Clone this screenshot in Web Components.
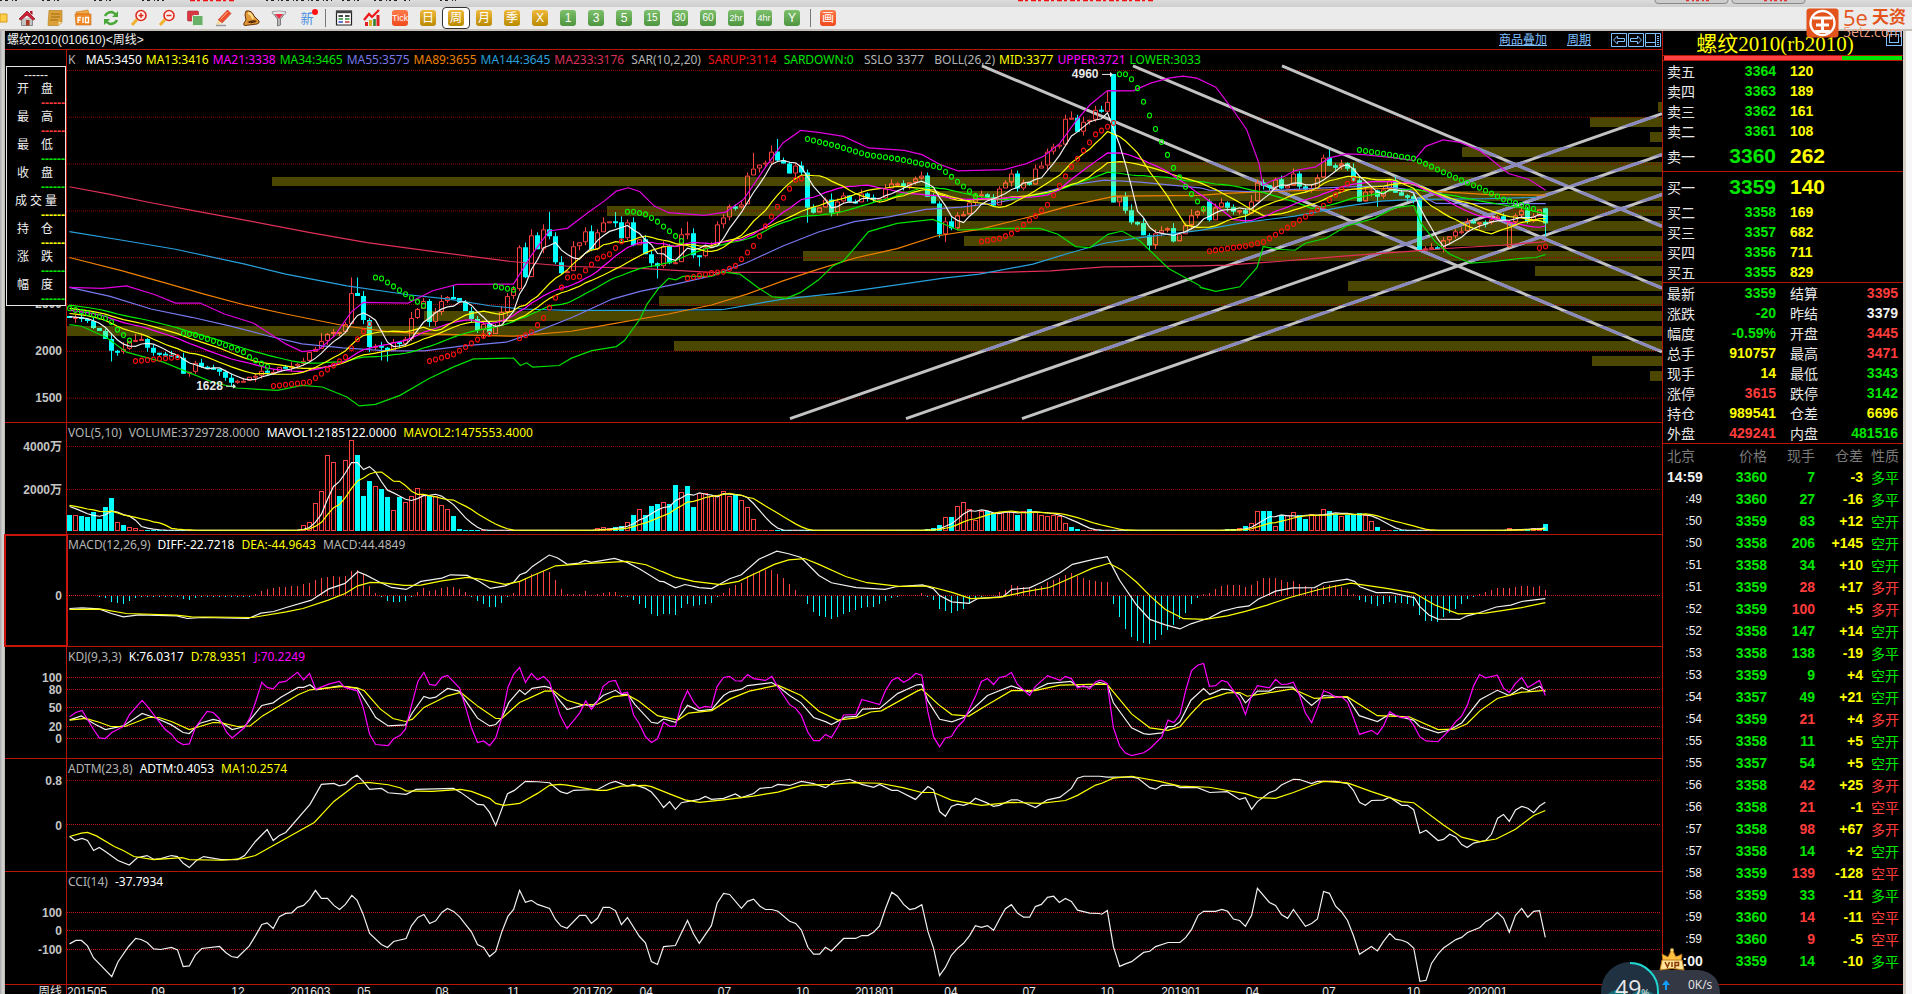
<!DOCTYPE html>
<html lang="zh-CN">
<head>
<meta charset="utf-8">
<title>螺纹2010 周线</title>
<style>
html,body{margin:0;height:100%;background:#000;overflow:hidden}
body{font:12px/20px "Liberation Sans","Noto Sans CJK SC",sans-serif}
</style>
</head>
<body>
<trade-app></trade-app>
<script>
/* ---------- data ---------- */
// Digitised curve tiles: [x scale, x origin, y scale, y origin]
const TILES={A:[2.45,0,3,30],B:[2.8,640,3,30],C:[2.904,1140,3,30],E:[2.376,0,3,420],F:[2.8,0,3,640],G:[2.8,560,2.732,420],H:[2.751,1100,2.732,420]};
const curve=s=>{let t;const out=[];for(const w of s.trim().split(/\s+/)){if(TILES[w]){t=TILES[w];continue}const[a,b]=w.split(',').map(Number);out.push((a/t[0]+t[1]).toFixed(1)+','+(b/t[2]+t[3]).toFixed(1))}return out.join(' ')};
const line=(pts,c,w=1.2)=>`<polyline points="${pts}" fill="none" stroke="${c}" stroke-width="${w}" vector-effect="non-scaling-stroke"/>`;
const X=i=>69.5+6*i;
// Sparse "index:value" list, linear between the knots
const knots=s=>{const k=s.trim().split(/\s+/).map(p=>p.split(':').map(Number)),o={};for(let n=0;n<k.length-1;n++){const[a,u]=k[n],[b,v]=k[n+1];for(let i=a;i<=b;i++)o[i]=u+(v-u)*(i-a)/(b-a)}return o};

const CLOSE=`868 865 870 876 898 905 930 965 968 960 935 933 930 958 972 975 978 982 988 1035 1030 1003 1015 1018 1020 1030 1048 1062 1056 1055 1045 1042 1025 1032 1028 1015 1018 1010 1005 995 970 960 935 915 910 908 885 793 800 872 955 950 958 965 938 945 930 868 840 817 880 850 815 805 806 820 845 870 903 885 915 890 850 802 780 655 745 618 660 600 620 700 733 725 652 640 605 660 610 580 577 578 628 580 647 630 675 702 710 652 703 700 615 613 677 680 655 650 585 565 530 535 525 437 418 405 398 365 392 402 433 408 430 535 548 535 510 550 515 497 515 520 492 505 510 508 478 463 462 470 460 447 437 500 521 615 575 597 557 555 518 498 494 505 527 478 458 432 477 458 465 417 407 367 350 345 268 265 305 275 270 240 245 217 518 502 542 580 583 617 648 612 602 596 635 615 587 557 547 540 573 535 520 533 546 542 553 517 458 468 475 450 478 468 433 472 480 478 443 385 408 412 403 418 452 517 485 484 502 480 452 490 497 500 512 660 658 653 656 632 620 607 605 577 583 578 580 570 562 572 580 558 543 575 560 540 583`.split(' ').map(Number);
const OPEN={0:860,174:132,190:515,240:655,246:537};
const HIGH={9:940,11:915,47:745,48:745,64:770,76:640,80:547,91:548,103:577,114:370,118:328,167:245,173:182,174:132,209:375,210:360,246:535,42:913};
const LOW={7:998,19:1035,27:1072,50:970,52:995,53:998,60:893,69:928,98:748,105:712,123:580,145:625,146:638,180:665,196:578,218:532,246:620,240:656};
const Y=v=>v/3+30;
const HIST=Array.from({length:40},(_,k)=>868-2.4*(40-k));
const ma=(arr,pre,n,f)=>{const a=pre.concat(arr),p=pre.length;return arr.map((_,i)=>{let s=0;for(let j=0;j<n;j++)s+=a[p+i-j];return X(i)+','+f(s/n).toFixed(1)}).join(' ')};

const BANDS=[1658,1590,1650,1462,1050,272,896,607,957,964,803,1535,1348,659,424,67,674,1592,1650];
const TREND='M982 66L1662 353M1133 66L1662 289M1282 66L1662 227M790 420L1662 114M906 420L1662 155M1022 420L1662 195';
const SAR_G=['0:838 6:868 7:880 8:902 10:935','19:913 21:918 25:942 29:970 30:985 33:1014','51:745 52:748 54:772 59:830','71:772 74:782','93:547 94:547 96:555 98:577 102:635','123:328 128:350 133:376 138:388 145:413 151:500','175:133 176:133 177:148 178:175 181:298 184:415 186:472 189:538','215:361 224:387 226:403 231:445 235:475 239:510 244:538'];
const SAR_R=['11:997 18:985','34:1072 40:1060 46:985 48:931 50:885','60:997 64:977 69:921 70:915','75:928 77:910 79:867 83:745 85:742 88:688 90:675 92:637','103:747 107:732 109:728 111:710 114:650 118:532 121:451 122:447','152:637 155:628 157:613 161:560 163:526 167:412 171:314 174:280','190:666 196:650 199:638 203:595 209:529 213:463 214:450','245:656 246:652'];

// Candles: an outline for rising weeks, a solid block for falling ones
function candles(){let up='',dn='',wu='',wd='';
  CLOSE.forEach((c,i)=>{const o=OPEN[i]??CLOSE[i-1],rise=c<=o,x=67+6*i;
    let a=Math.round(Y(Math.min(c,o))),b=Math.round(Y(Math.max(c,o)));if(b-a<2)b=a+2;
    const hi=HIGH[i]?Y(HIGH[i]):a-(i*7%5)-(b-a>9?2:0),lo=LOW[i]?Y(LOW[i]):b+(i*11%6)-1;
    if(rise){up+=`M${x+.5} ${a+.5}h4v${b-a-1}h-4z`;wu+=`M${x+2.5} ${hi}V${a}M${x+2.5} ${b}V${Math.max(lo,b)}`}
    else{dn+=`M${x} ${a}h5v${b-a}h-5z`;wd+=`M${x+2.5} ${hi}V${Math.max(lo,b)}`}});
  return(r,c)=>`<path d="${up}${wu}" fill="none" stroke="${r}"/><path d="${dn}" fill="${c}"/><path d="${wd}" stroke="${c}"/>`}

function mainPlot(){
  const bands=BANDS.map((x,k)=>`<rect x="${x}" y="${102+15*k}" width="${1662-x}" height="10"/>`).join('');
  const cs=candles();
  const dots=(l,c)=>l.map(s=>Object.entries(knots(s)).map(([i,v])=>`<ellipse cx="${X(+i)}" cy="${Y(v).toFixed(1)}" rx="2" ry="2.5"/>`).join('')).map(g=>`<g fill="none" stroke="${c}" stroke-width="1.1">${g}</g>`).join('');
  return `<defs><clipPath id="b">${bands}</clipPath></defs><g fill="#4b4600" shape-rendering="crispEdges">${bands}</g>`
  +grid([70,117,164,211,258,305,352,399],'#900000')
  +`<path d="${TREND}" stroke="#c3c3c3" stroke-width="3"/><path d="${TREND}" stroke="#8a8abf" stroke-width="3.2" clip-path="url(#b)"/>`
  +`<g>${cs('#ff4040','#00ffff')}</g><g clip-path="url(#b)">${cs('#ff6a38','#46ffb9')}</g>`
  +line(curve('A 170,472 270,495 370,520 500,550 620,577 760,610 900,640 1050,665 1250,697 1400,712 1568,718 B 200,730 700,730 1000,730 1150,725 1300,713 1568,710 C 250,708 400,697 600,680 800,665 900,657 1050,648 1178,637'),'#e03058')
  +line(curve('A 170,607 300,633 430,660 600,705 700,735 850,770 1000,797 1100,810 1200,830 1280,840 1390,844 1568,844 B 230,842 400,810 550,793 700,770 850,747 950,735 1100,705 1200,672 1300,642 1400,625 1568,603 C 300,580 450,560 600,530 700,515 800,510 1000,508 1150,504'),'#28a0dc')
  +line(curve('A 170,685 300,725 400,760 500,795 600,828 700,855 850,892 950,908 1050,915 1200,920 1260,922 1400,907 1500,885 1568,870 B 80,855 200,828 300,795 400,755 500,720 600,687 720,658 830,620 950,600 1100,560 1200,530 1330,500 1568,498 C 250,492 400,485 600,480 720,477 850,485 1000,495 1178,497'),'#f08000')
  +line(curve('A 170,775 270,802 370,840 470,865 570,893 660,922 740,945 840,957 950,966 1040,966 1130,952 1240,940 1300,915 1400,866 1500,810 1568,787 B 100,765 200,740 300,700 400,650 500,608 600,577 700,562 800,540 900,533 1000,520 1100,498 1200,468 1300,452 1400,458 1568,475 C 200,482 330,487 450,480 600,472 700,470 780,480 860,522 950,523 1080,523 1178,523'),'#7878f0')
  +line(ma(CLOSE,HIST,34,Y),'#00f000')+line(ma(CLOSE,HIST,26,Y),'#ffff00')+line(ma(CLOSE,HIST,21,Y),'#ff00ff')+line(ma(CLOSE,HIST,13,Y),'#ffff00')+line(ma(CLOSE,HIST,5,Y),'#f0f0f0')
  +line(curve('A 170,775 250,778 310,770 380,797 430,822 490,822 550,855 620,882 700,945 740,968 780,963 820,920 860,850 890,820 1000,822 1060,785 1120,766 1258,765 1300,682 1345,605 1390,597 1440,550 1480,515 1510,485 1540,475 1568,487 B 40,530 80,550 180,558 240,548 290,510 350,415 400,340 450,302 500,308 570,320 640,355 740,362 790,375 840,405 890,424 1020,420 1080,403 1130,380 1175,342 1220,275 1260,225 1309,182 1380,183 1430,160 1480,145 1520,139 C 165,145 220,172 270,240 310,300 345,400 357,467 380,455 420,440 450,423 510,412 550,385 600,373 650,375 740,385 795,393 830,350 880,331 930,338 985,362 1020,390 1070,432 1130,450 1178,482'),'#e000e0')
  +line(curve('A 170,887 200,892 260,925 310,970 400,1000 460,1030 520,1060 580,1078 680,1085 740,1070 790,1075 850,1105 880,1132 920,1127 980,1100 1050,1050 1110,1015 1160,990 1258,988 1275,1010 1290,1002 1305,1015 1370,1010 1400,988 1450,965 1510,953 1530,935 1568,870 B 20,825 50,780 80,748 100,752 120,742 200,742 230,728 280,735 330,775 370,803 410,808 450,790 500,752 540,710 570,695 640,607 720,582 820,570 890,602 1000,597 1120,597 1170,615 1220,652 1260,655 1310,615 1350,605 1400,635 1480,718 1568,770 C 175,775 220,787 290,773 340,715 358,652 400,660 450,663 480,642 540,627 600,590 680,567 740,535 795,528 815,580 860,640 900,675 960,702 1030,697 1100,688 1150,685 1178,676'),'#00e000')
  +dots(SAR_G,'#00ff00')+dots(SAR_R,'#ff1010')
  +`<g stroke="#e8e8e8" fill="#e8e8e8"><path d="M1102 74.500h9M226 387.500h9"/><path stroke="none" d="M1110 72l3 2.500-3 2.500zM233 385l3 2.500-3 2.500z"/></g>`;
}
const grid=(ys,c)=>`<path d="${ys.map(y=>`M67 ${y+.5}H1661`).join('')}" stroke="${c}" stroke-dasharray="1 1" shape-rendering="crispEdges"/>`;

// Weekly volume bars, r rising / c falling
function volumes(){
  const v={},put=(i,s,base,k)=>s.split(' ').forEach((w,j)=>v[i+j]=[(base-parseInt(w))/k,w.slice(-1)]);
  for(let i=0;i<247;i++)v[i]=[1,CLOSE[i]<=(CLOSE[i-1]??0)?'r':'c'];
  put(0,'288c 286r 291c 294c 279c 300c 264c 237c 307r 318c 322r 325r 331r',335,3);
  put(38,'331r 318r 307r 250r 214r 106r 127r 231c 121r 61r 108c 231c 186c 199r 210c 234c 271r 234c 247r 229r 205r 227r 230c 231r 256r 268r 291c 328c',335,3);
  put(88,'298r 295r 298r 293c 291c 280r 261c 244r 262c 238c 230c 227r 232c 180c 198r 183c 240c 200r 200r 210r 206r 195r 209r 205c 220r 240r 273r 301r',305,2.732);
  put(143,'300c 298c 288c 268r 268c 238r 227r 244r 275r 250r 250c 255c 253r 253r 253r 260c 250r 246c 253r 260r 265r 262r 265r 282r 295c 300c',305,2.732);
  put(193,'300c 299c 298r 292c 282r 251r 251c 251c 290r 260c 262r 252r 260c 272c 258r 262r 246r 251c 258c 265r 260c 260c 257c 260r 277r 295c',305,2.732);
  put(240,'298r 300r 299r 299c 298r 296r 287c',305,2.732);
  return Array.from({length:247},(_,i)=>v[i])}
function volPlot(){
  const v=volumes();let r='',c='';
  v.forEach(([h,k],i)=>{h=Math.max(1,Math.round(h));const x=67+6*i;if(k==='r')r+=h<3?`M${x} 531.500h5`:`M${x+.5} ${532.5-h}h4v${h-1}h-4z`;else c+=`M${x} ${532-h}h5v${h}h-5z`});
  const h=v.map(a=>a[0]),pre=Array(10).fill(27),f=y=>532-y;
  return grid([447,490],'#900000')+`<g shape-rendering="crispEdges"><path d="${r}" fill="none" stroke="#ff4040"/><path d="${c}" fill="#0ff"/></g>`+line(ma(h,pre,5,f),'#f0f0f0')+line(ma(h,pre,10,f),'#ffff00')}

const MACD_H=knots('0:1 3:1 5:-1 6:-2 7:-6 8:-7 9:-8 10:-5 11:-2 12:-1 18:-1 19:-3 20:-4 21:-2 22:-1 30:-1 31:2 32:5 34:8 36:9 38:10 40:13 42:18 44:20 45:19 46:20 47:25 48:26 49:22 50:10 51:3 52:-1 53:-5 54:-6 55:-6 56:-5 57:-1 58:4 59:8 60:5 61:6 62:8 63:9 64:9 65:7 66:4 67:-1 68:-5 69:-8 70:-11 71:-11 72:-7 73:-1 74:3 75:14 77:22 78:23 79:25 80:24 81:16 82:7 83:2 85:2 86:5 87:1 88:2 90:4 91:4 92:-1 93:-1 94:-4 95:-8 96:-12 97:-18 98:-20 99:-18 101:-19 102:-12 103:-8 104:-10 106:-8 107:-7 108:-1 109:3 110:8 112:13 113:20 115:25 117:26 118:22 119:18 121:6 122:1 123:-8 124:-16 125:-20 127:-23 128:-21 130:-16 132:-12 134:-11 136:-5 137:-2 138:-1 141:1 142:3 143:-1 144:-4 145:-13 147:-17 149:-13 150:-8 151:-3 152:-1 154:1 156:6 157:11 159:9 161:8 162:10 163:14 165:18 167:23 168:20 170:16 172:14 173:14 174:-8 175:-21 176:-33 177:-41 178:-45 179:-47 180:-48 181:-44 182:-39 184:-29 186:-17 187:-8 188:-2 189:2 190:3 192:10 193:11 195:11 196:9 197:11 198:15 199:18 201:18 203:14 204:15 205:12 207:8 208:8 209:10 211:11 213:7 214:2 215:-4 217:-8 218:-10 220:-6 223:-8 224:-10 225:-19 226:-25 228:-26 230:-17 231:-13 233:-3 234:-1 235:2 237:6 238:8 240:8 242:10 244:9 245:10 246:6');
function macdPlot(){let r='',c='';for(const i in MACD_H){const h=MACD_H[i],s=`M${X(+i)} 597V${597-Math.round(h)}`;h>=0?r+=s:c+=s}
  return grid([596],'#d01818')+`<g shape-rendering="crispEdges"><path d="${r}" stroke="#ff4040"/><path d="${c}" stroke="#0ff"/></g>`
  +line(curve('E 165,568 195,566 235,569 265,583 293,593 330,587 420,590 445,598 480,595 590,598 620,582 650,577 680,565 740,543 780,510 820,493 850,458 870,468 900,488 930,505 965,511 1000,487 1050,477 1070,467 1110,469 1140,488 1165,508 1200,500 1220,490 1235,467 1250,460 1265,442 1305,408 1325,417 1348,436 1375,432 1390,424 1405,430 1460,418 1490,430 1520,450 1568,487 G 290,444 323,461 350,452 390,460 425,463 475,436 508,425 557,383 607,361 640,368 675,378 725,427 760,447 830,460 910,465 940,458 1015,453 1045,463 1063,482 1097,499 1145,503 1170,490 1240,485 1265,465 1315,461 1350,445 1400,420 1435,397 1500,382 H 20,376 37,408 54,440 100,507 137,547 180,562 220,573 250,559 300,543 335,525 380,514 410,510 435,492 483,470 530,461 590,460 615,447 680,437 700,443 715,458 760,474 800,474 865,488 880,512 905,535 930,546 990,547 1010,537 1040,530 1090,513 1130,508 1160,498 1225,490'),'#f0f0f0')
  +line(curve('E 165,571 240,570 300,583 420,588 455,593 600,595 680,578 720,568 780,543 820,523 850,500 880,490 910,491 960,499 1000,498 1050,485 1110,475 1140,480 1200,496 1235,487 1265,470 1320,440 1400,433 1490,427 1535,437 1568,455 G 290,418 323,432 375,443 450,452 500,443 557,417 600,397 640,385 685,381 725,397 800,430 860,447 950,457 1030,456 1100,474 1150,490 1230,487 1300,472 1370,460 1450,425 1490,408 H 25,394 60,412 100,445 140,485 180,520 230,545 290,547 350,537 400,525 460,508 520,488 600,466 690,448 780,461 865,475 920,507 985,532 1060,530 1160,515 1225,501'),'#ffff00')}
const kdjPlot=()=>grid([678,690,708,727,739],'#c01010')
  +line(curve('F 195,242 228,230 262,253 295,271 345,260 398,223 440,238 480,257 513,280 530,283 560,252 597,241 614,245 650,271 685,262 715,223 733,199 765,191 785,175 835,145 850,145 868,137 885,152 950,140 1000,148 1035,205 1052,235 1087,260 1135,257 1155,220 1187,172 1203,178 1220,174 1253,148 1285,156 1337,237 1371,260 1388,256 1405,236 1425,190 1455,153 1470,166 1490,148 1525,142 1540,146 1568,185 G 20,793 70,780 90,785 120,755 155,741 172,752 190,752 210,780 256,828 273,831 290,819 323,828 357,782 390,797 425,793 458,755 475,745 508,738 525,728 593,720 610,730 643,755 675,775 710,815 745,827 760,834 800,814 830,812 847,792 895,790 945,750 1000,726 1013,725 1030,770 1063,820 1097,827 1130,815 1197,755 1264,729 1315,746 1365,723 1430,717 1450,730 1483,732 1510,719 H 20,725 37,775 87,843 120,859 135,861 170,857 187,840 203,839 220,827 250,768 285,736 302,752 335,738 355,739 385,752 400,775 433,743 466,743 483,733 530,732 565,767 582,782 615,755 680,760 713,810 763,826 797,806 862,822 880,840 930,857 960,850 995,830 1045,767 1093,741 1126,755 1160,733 1180,742 1210,730 1225,745'),'#f0f0f0')
  +line(curve('F 195,243 240,238 280,250 310,262 350,262 415,235 445,235 480,247 530,271 597,250 620,251 665,262 700,260 735,230 835,167 868,152 960,142 1000,146 1020,155 1065,210 1100,238 1135,247 1155,240 1187,205 1253,170 1290,160 1340,203 1388,238 1405,238 1455,190 1525,156 1550,155 1568,170 G 20,768 60,780 105,779 150,758 190,754 220,770 273,810 330,822 360,803 425,796 475,765 530,743 610,727 675,755 725,798 778,822 830,816 870,800 900,797 1000,743 1013,738 1060,780 1097,807 1145,811 1197,780 1264,742 1330,742 1400,727 1510,724 H 20,725 87,805 137,843 187,850 220,840 250,805 285,769 350,748 385,747 405,757 450,750 530,737 590,763 680,758 763,810 850,813 930,848 975,847 1010,832 1045,797 1093,763 1160,746 1225,741'),'#ffff00')
  +line(curve('F 195,233 212,220 230,214 262,271 278,296 295,298 313,280 345,262 362,227 398,184 415,205 440,240 462,270 480,285 497,307 513,316 530,314 547,265 580,217 597,220 614,238 635,280 650,296 685,265 700,235 715,190 733,130 748,145 765,149 782,130 800,127 833,100 850,122 867,103 884,151 920,135 950,127 965,145 1000,155 1017,205 1035,285 1052,316 1087,319 1103,298 1120,289 1135,270 1152,200 1170,127 1187,100 1203,136 1220,139 1237,115 1253,109 1287,147 1304,205 1320,265 1337,310 1354,305 1371,319 1388,296 1405,236 1422,145 1438,106 1455,85 1471,130 1488,103 1505,122 1522,112 1539,130 1568,227 G 5,818 20,845 55,803 72,770 88,793 105,772 121,730 138,717 155,714 172,750 189,746 206,808 222,832 239,867 256,883 273,873 290,828 307,839 323,839 340,778 357,742 374,773 390,790 407,785 424,787 440,730 458,706 475,703 491,715 508,716 525,698 542,709 575,714 593,703 610,732 643,780 660,790 676,810 694,855 710,878 727,878 743,861 760,870 778,840 794,808 828,807 845,766 895,780 911,742 929,714 945,706 962,719 979,710 996,695 1013,700 1030,800 1046,868 1063,895 1079,871 1096,867 1113,840 1130,824 1147,790 1163,758 1180,717 1197,709 1214,725 1230,706 1247,703 1264,692 1281,725 1315,755 1331,730 1365,701 1400,714 1415,703 1432,709 1449,735 1466,728 1483,737 1500,718 1510,714 H 5,714 20,723 37,843 54,892 70,912 87,919 120,911 137,900 170,868 187,822 203,829 220,807 236,740 252,687 270,672 285,668 301,730 318,728 335,714 351,719 384,766 400,807 417,755 433,728 466,734 483,711 499,725 516,724 532,719 549,755 565,803 582,829 598,790 615,742 631,748 648,760 664,758 681,773 697,815 714,861 747,850 763,861 780,838 797,799 813,809 830,816 846,813 863,836 880,868 897,879 930,881 962,848 979,826 995,811 1011,780 1028,728 1044,698 1061,707 1093,700 1110,735 1126,747 1143,722 1160,706 1177,733 1209,714 1225,755'),'#ff00ff');
const adtmPlot=()=>grid([781],'#900000')+grid([825],'#c01010')
  +line(curve('F 195,592 210,604 230,598 245,604 262,634 278,625 295,637 330,664 362,677 385,655 412,649 430,660 450,658 480,649 497,652 513,672 530,685 550,664 570,652 620,661 665,661 685,649 715,607 748,571 765,604 782,589 800,580 868,496 900,436 935,433 950,440 967,436 985,418 1000,409 1017,427 1035,451 1068,448 1087,461 1137,466 1165,451 1270,448 1290,460 1337,496 1354,497 1371,520 1388,559 1421,464 1440,454 1471,427 1505,428 1539,431 1568,457 G 5,1019 20,1023 38,1014 105,1012 138,995 155,990 189,1003 206,998 239,1009 256,1019 273,1038 290,1061 307,1045 323,1066 340,1048 390,1039 407,1031 424,1039 458,1036 491,1024 508,1034 542,1023 560,1009 593,1006 610,998 643,1001 676,990 710,996 743,1007 770,990 811,984 845,998 878,1006 895,998 929,1014 945,1014 995,1039 1030,1004 1046,1013 1063,1072 1079,1085 1096,1058 1113,1052 1130,1055 1147,1049 1163,1036 1197,1049 1214,1058 1230,1055 1264,1040 1281,1040 1331,1061 1365,1040 1400,1033 1432,1009 1449,981 1466,976 1510,976 H 20,978 90,978 105,982 137,1007 153,1011 170,1001 203,1000 220,1007 268,1007 302,1020 350,1018 384,1039 400,1034 417,1066 433,1045 466,1020 483,1014 499,1000 532,984 549,985 582,996 598,990 648,990 681,996 697,1014 714,1047 730,1055 747,1042 780,1041 797,1033 830,1055 846,1055 863,1067 880,1131 897,1123 930,1151 945,1148 962,1134 979,1142 995,1162 1010,1170 1028,1158 1061,1151 1077,1134 1094,1090 1110,1080 1126,1099 1143,1068 1160,1058 1177,1063 1193,1075 1209,1057 1225,1047'),'#f0f0f0')
  +line(curve('F 195,592 228,582 245,580 270,590 320,622 345,634 375,652 430,661 510,655 530,661 620,663 680,658 715,649 750,628 850,568 880,550 935,487 1000,434 1030,430 1087,437 1120,446 1137,455 1210,457 1290,451 1320,457 1371,478 1388,493 1410,499 1455,493 1505,463 1539,439 1568,436 G 20,1000 105,1014 130,1014 172,1003 239,1001 256,1004 307,1024 350,1040 390,1047 458,1040 542,1030 610,1019 676,1001 760,998 820,993 895,995 960,1007 1013,1020 1046,1020 1096,1041 1180,1055 1264,1047 1345,1050 1415,1042 1449,1028 1500,1000 H 5,995 37,981 87,976 160,989 220,1003 300,1006 400,1023 433,1034 483,1036 532,1020 582,1001 615,990 681,994 747,1018 830,1045 863,1048 945,1109 995,1142 1045,1154 1090,1147 1143,1120 1193,1083 1225,1069'),'#ffff00');
const cciPlot=()=>grid([912,930,949],'#c01010')
  +line(curve('F 195,911 212,901 228,901 245,917 262,953 313,1009 330,965 360,919 380,895 395,898 412,907 430,926 450,928 480,922 497,929 513,979 530,977 547,944 565,925 615,919 632,937 648,949 665,952 698,917 715,887 733,853 748,848 765,865 782,830 800,820 817,818 833,802 850,796 867,778 883,751 900,775 917,775 935,796 951,808 967,793 985,766 1000,781 1017,823 1035,880 1068,913 1085,922 1102,904 1137,895 1152,857 1170,832 1187,823 1203,850 1220,842 1237,817 1253,805 1270,814 1287,830 1320,875 1337,913 1354,922 1371,949 1388,934 1405,875 1422,829 1438,808 1455,751 1471,787 1488,781 1505,793 1539,805 1555,838 1568,854 G 3,1382 20,1388 55,1353 72,1353 88,1375 105,1361 121,1331 138,1331 155,1340 172,1378 189,1359 222,1410 239,1428 256,1479 273,1487 290,1438 323,1435 340,1401 357,1367 374,1404 390,1429 424,1381 440,1320 458,1293 475,1296 508,1334 525,1315 542,1309 560,1328 575,1337 593,1337 610,1342 643,1369 660,1375 676,1393 694,1440 710,1459 727,1459 743,1440 760,1450 794,1416 828,1416 845,1408 862,1408 878,1399 895,1382 911,1335 929,1290 945,1301 962,1323 979,1337 995,1334 1013,1324 1030,1397 1046,1443 1063,1517 1079,1495 1096,1462 1113,1443 1130,1429 1147,1408 1163,1381 1180,1386 1197,1381 1214,1394 1230,1364 1247,1335 1264,1324 1281,1347 1298,1358 1315,1358 1331,1329 1348,1323 1365,1304 1382,1301 1398,1318 1415,1307 1432,1315 1449,1339 1483,1347 1510,1348 H 5,1350 20,1340 37,1438 54,1492 70,1485 87,1479 120,1454 137,1451 153,1438 187,1427 220,1427 236,1413 252,1391 270,1353 285,1342 318,1342 335,1337 351,1342 367,1363 384,1367 400,1383 417,1353 433,1279 466,1318 483,1326 499,1351 516,1361 532,1337 565,1383 582,1375 598,1363 615,1288 631,1293 648,1328 664,1343 681,1367 697,1408 714,1459 747,1438 763,1450 780,1424 797,1402 813,1418 830,1421 846,1427 863,1442 880,1533 897,1530 912,1484 930,1458 945,1442 979,1419 995,1413 1011,1400 1045,1386 1061,1370 1077,1361 1093,1345 1110,1361 1126,1399 1143,1353 1160,1334 1177,1358 1193,1342 1209,1340 1225,1413'),'#f0f0f0');

const PANELS={
  main:{top:50,h:373,draw:mainPlot,ticks:{305:'2500',352:'2000',399:'1500'}},
  vol:{top:424,h:111,draw:volPlot,ticks:{448:'4000万',491:'2000万'}},
  macd:{top:536,h:111,draw:macdPlot,ticks:{597:'0'}},
  kdj:{top:648,h:111,draw:kdjPlot,ticks:{679:'100',691:'80',709:'50',728:'20',740:'0'}},
  adtm:{top:760,h:111,draw:adtmPlot,ticks:{782:'0.8',826:'0'}},
  cci:{top:872,h:112,draw:cciPlot,ticks:{913:'100',931:'0',950:'-100'}}
};

/* ---------- elements ---------- */
const define=(name,render)=>customElements.define(name,class extends HTMLElement{
  constructor(){super();this.attachShadow({mode:'open'})}
  connectedCallback(){this.shadowRoot.innerHTML=render(this)}
});

define('chart-panel',el=>{const k=el.getAttribute('kind'),p=PANELS[k];return `<style>
:host{display:grid;grid-template-columns:62px 1fr;border-top:1px solid #b8140a;min-height:0;box-sizing:border-box}
.axis{position:relative;border-right:1px solid #b8140a;color:#c4c4c4;font:bold 12px/14px "Liberation Sans","Noto Sans CJK SC",sans-serif}
:host([kind=macd]) .axis{outline:2px solid #c8140a;outline-offset:-1px}
.axis span{position:absolute;right:4px;transform:translateY(-50%);white-space:nowrap}
.plot{position:relative;min-width:0}
svg{position:absolute;inset:0;width:100%;height:100%}
.legend{position:relative;display:flex;gap:7px;padding-left:1px;font:12px/20px "Noto Sans","Noto Sans CJK SC",sans-serif;color:#b4b4b4;white-space:pre}
:host([kind=main]) .legend{gap:4px}
.mark{position:absolute;font:bold 12px/14px "Liberation Sans",sans-serif;color:#e8e8e8;transform:translateY(-50%)}
</style><div class="axis">${Object.entries(p.ticks).map(([y,t])=>`<span style="top:${((y-p.top)/p.h*100).toFixed(2)}%">${t}</span>`).join('')}</div>
<div class="plot"><svg viewBox="67 ${p.top} 1595 ${p.h}" preserveAspectRatio="none" aria-hidden="true">${p.draw()}</svg>
<div class="legend"><slot></slot></div>${k==='main'?'<span class="mark" style="left:63%;top:6.500%">4960</span><span class="mark" style="left:8.100%;top:90.500%">1628</span>':''}</div>`});

define('value-box',()=>{const rows=[['开盘','#ff3c3c'],['最高','#ff3c3c'],['最低','#00e600'],['收盘','#00e600'],['成交量','#ffff00'],['持仓','#ffff00'],['涨跌','#00e600'],['幅度','#00e600']];return `<style>
:host{position:absolute;left:1px;top:35px;width:60px;height:240px;box-sizing:border-box;z-index:2;background:#000;border:1px solid #e8e8e8;font:12px/14px "Liberation Sans","Noto Sans CJK SC",sans-serif;color:#f0f0f0;padding-top:2px}
.h{text-align:center;line-height:12px}
dl{margin:0}
dt{display:flex;justify-content:space-between;width:36px;margin:0 auto 0 10px;line-height:16px}
dt.w{width:42px;margin-left:8px}
dd{margin:0;text-align:right;line-height:12px;font-weight:bold}
</style><div class="h">------</div><dl>${rows.map(([n,c])=>`<dt class="${n.length>2?'w':''}">${[...n].map(x=>`<span>${x}</span>`).join('')}</dt><dd style="color:${c}">------</dd>`).join('')}</dl>`});

define('tool-button',el=>{const c=el.getAttribute('tone')||'';return `<style>
:host{display:block;width:28px;height:22px}
button{all:unset;box-sizing:border-box;width:28px;height:22px;display:grid;place-items:center;cursor:pointer}
:host([on]) button{background:#fff;border:1px solid #333;border-radius:4px}
.t{width:16px;height:16px;border-radius:3px;color:#fff;font:12px/16px "Liberation Sans","Noto Sans CJK SC",sans-serif;text-align:center;overflow:hidden;white-space:nowrap}
.t.n{font-size:10px}.t.x{font-size:9px}
.gold{background:linear-gradient(#f0b93c,#b98a00)}.green{background:linear-gradient(#7cc06a,#4f9440)}.red{background:linear-gradient(#ff7a4a,#f04a1c)}
svg,::slotted(svg){display:block}
</style><button aria-label="${el.getAttribute('label')||el.textContent}">${c?`<span class="t ${c}${['','',' n',' x',' x'][el.textContent.length]}"><slot></slot></span>`:'<slot></slot>'}</button>`});

const ic=(label,d)=>`<tool-button label="${label}"><svg width="18" height="18" viewBox="0 0 18 18">${d}</svg></tool-button>`;
define('app-toolbar',()=>{
 const t=(n,x,on)=>`<tool-button tone="${n}" ${on?'on':''}>${x}</tool-button>`;
 return `<style>
:host{display:block;background:#ebebeb;border-bottom:2px solid #c4c0b8;height:29px}
.menu{height:7px;background:linear-gradient(#dcdcdc,#cecece);overflow:hidden}
.menu svg{display:block;width:100%;height:7px}
.bar{display:flex;height:22px}
.sep{width:1px;height:18px;margin:2px 4px 0;background:#777}
</style><div class="menu"><svg viewBox="0 0 1912 7" preserveAspectRatio="none" aria-hidden="true">
<path d="M0 .5h20M42 .5h20M94 .5h20M142 .5h22M266 .5h66M342 .5h20M374 .5h24M404 .5h6M440 .5h16" stroke="#222" stroke-dasharray="2 3 3 4 1 2"/><path d="M190 .5h46M1018 .5h136" stroke="#f01010" stroke-width="1.500" stroke-dasharray="5 2 3 3"/>
<path d="M1655-4v5q0 2.500 4 2.500h65q4 0 4-2.500v-5zM1732-4v5q0 2.500 4 2.500h65q4 0 4-2.500v-5z" fill="#ccc" stroke="#888"/><path d="M1686 .5h26M1764 .5h24" stroke="#d33" stroke-width="1.500" stroke-dasharray="3 3 2 2"/></svg></div>
<nav class="bar"><svg width="13" height="22"><path d="M0 7h7v8H0z" fill="#ffcf4a" stroke="#d89a18"/></svg>
${ic('首页','<path d="M3.500 9v7.500h11V9" fill="#c4c4c4" stroke="#888"/><path d="M1 10L9 2l8 8-2 1-6-5-6 5z" fill="#d02036" stroke="#98182a" stroke-width=".8"/><path d="M12 2h2.500v4L12 4z" fill="#b01828"/><path d="M8 11h3.500v5.500H8z" fill="#a83a20"/>')}
${ic('公告','<path d="M3 1.500h13v12l-3.500 3H2z" fill="#dca038" stroke="#b07818" stroke-width=".6"/><path d="M5 5h9M5 8h9M4 11h8" stroke="#a06a10"/><path d="M12.500 16.500v-3.500H16z" fill="#f8e0a8"/>')}
${ic('F10','<path d="M2 3l12-2 1 4H2z" fill="#f0a848" stroke="#d07818" stroke-width=".6"/><path d="M1 5h16v11H2z" fill="#f08a28" stroke="#d06a10" stroke-width=".6"/><path d="M4 8v6M4 8.500h3M4 11h2.500M9 8v6M11.500 8.500h3v5h-3z" stroke="#fff" stroke-width="1.300" fill="none"/>')}
${ic('刷新','<path d="M3 7q2-4 7-4l5 3M15 11q-2 4-7 4l-5-3" fill="none" stroke="#4aa838" stroke-width="2.600"/><path d="M16 2v6h-6zM2 16v-6h6z" fill="#4aa838"/>')}
${ic('放大','<circle cx="11" cy="6.500" r="5" fill="#fff0ec" stroke="#e02c20" stroke-width="1.600"/><path d="M8.500 6.500h5M11 4v5" stroke="#e02c20" stroke-width="1.500"/><path d="M7 10.500L2 16" stroke="#f0b030" stroke-width="3"/>')}
${ic('缩小','<circle cx="11" cy="6.500" r="5" fill="#fff0ec" stroke="#e02c20" stroke-width="1.600"/><path d="M8.500 6.500h5" stroke="#e02c20" stroke-width="1.500"/><path d="M7 10.500L2 16" stroke="#f0b030" stroke-width="3"/>')}
${ic('叠加','<rect x="1.500" y="2" width="11" height="10" rx="1" fill="#d83844" stroke="#a82834" stroke-width=".6"/><rect x="6.500" y="6.500" width="10.500" height="10" rx="1" fill="#68b068" stroke="#e0f0e0"/>')}
${ic('画笔','<path d="M4 11L13.500 1l3.500 3.500L8 14z" fill="#f0502c" stroke="#b83018" stroke-width=".6"/><path d="M6.500 10.500l7-7.500" stroke="#ffb090"/><path d="M4 11l4 3-6 2z" fill="#f8d8a0"/><path d="M2 16.500h10" stroke="#999" stroke-width="1.500"/>')}
${ic('预警','<path d="M4 2q6-1 8 5l5 5q1 2-2 3l-12 1.500q-2 0-1-2.500l2-3q-2-6 0-9z" fill="#e09838" stroke="#6b3408"/><path d="M6 4q4 1 5 6" stroke="#ffe090" stroke-width="2" fill="none"/><path d="M5 13q6-3 10-1q-4 4-10 1z" fill="#5d2d08"/>')}
${ic('选股','<path d="M2 3h14l-5.500 7v6l-3 1V10z" fill="#b8b8b8" stroke="#666" stroke-width=".8"/><ellipse cx="9" cy="4" rx="7" ry="2" fill="#e8e8e8" stroke="#888" stroke-width=".6"/><path d="M5 5h8l-4 5z" fill="#f03048"/>')}
<tool-button label="新"><span style="position:relative;color:#4a90e0;font:13px/18px 'Noto Sans CJK SC',sans-serif">新<i style="position:absolute;right:-4px;top:0;width:6px;height:6px;border-radius:3px;background:#ff1010"></i></span></tool-button>
<span class="sep"></span>
${ic('报价','<path d="M1.500 2h15v14h-15z" fill="#fff" stroke="#222" stroke-width="1.200"/><path d="M1 3h16" stroke="#444" stroke-width="2.400"/><path d="M3.500 7h4.500M10 7h4.500" stroke="#111" stroke-width="1.400"/><path d="M3.500 10h4.500M10 10h4.500" stroke="#209030" stroke-width="1.400"/><path d="M3.500 13h4.500" stroke="#2038c0" stroke-width="1.400"/><path d="M10 13h4.500" stroke="#c02020" stroke-width="1.400"/>')}
${ic('走势','<path d="M1 11l5-6 3 3 7-7" fill="none" stroke="#f01818" stroke-width="2.200"/><path d="M3.500 13v4M15 6v11" stroke="#e02020" stroke-width="3"/><path d="M7.500 11v6" stroke="#d8b020" stroke-width="3"/><path d="M11.500 10v7" stroke="#308030" stroke-width="2.600"/>')}
${t('red','Tick')}${t('gold','日')}${t('gold','周',1)}${t('gold','月')}${t('gold','季')}${t('gold','X')}
${['1','3','5','15','30','60','2hr','4hr','Y'].map(x=>t('green',x)).join('')}<span class="sep" style="margin-right:3px"></span>${t('red','画')}</nav>`});

define('chart-header',()=>`<style>
:host{display:flex;align-items:center;height:18px;padding:0 1px 0 2px;font:12px/18px "Liberation Sans","Noto Sans CJK SC",sans-serif;color:#f0f0f0}
h1{margin:0;font:inherit;flex:1}
a{color:#80c0ff;margin-right:20px}
.b{display:flex;gap:1px}
button{all:unset;width:16px;height:15px;display:block}
svg{display:block}
</style><h1>螺纹2010(010610)&lt;周线&gt;</h1><a href="#">商品叠加</a><a href="#">周期</a><div class="b">
<button aria-label="左移"><svg width="16" height="15" fill="none" stroke="#80c0ff"><path d="M.5.500h15v13H.5zM2.500 7l4-4v2.500h7v3h-7V11z"/></svg></button>
<button aria-label="右移"><svg width="16" height="15" fill="none" stroke="#80c0ff"><path d="M.5.500h15v13H.5zM13.500 7l-4-4v2.500h-7v3h7V11z"/></svg></button>
<button aria-label="布局"><svg width="16" height="15" fill="none" stroke="#80c0ff"><path d="M.5.500h15v13H.5zM10.500.500v13M.5 9.500h10M12 3.500h2M12 5.500h2M12 7.500h2M12 9.500h2M12 11.500h2"/></svg></button></div>`);

define('time-axis',()=>{const t={'201505':67,'09':152,'12':231,'201603':291,'05':357,'08':435,'11':507,'201702':573,'04':639,'07':717,'10':796,'201801':855,'04 ':945,'07 ':1022,'10 ':1101,'201901':1161,' 04':1245,' 07':1323,' 10':1407,'202001':1467};
return `<style>:host{display:grid;grid-template-columns:62px 1fr;height:9px;border-top:1px solid #b8140a;overflow:hidden;font:12px/14px "Liberation Sans","Noto Sans CJK SC",sans-serif;color:#e8e8e8}
.u{border-right:1px solid #b8140a;text-align:right;padding-right:4px;overflow:hidden}.s{position:relative}.s span{position:absolute;top:0}</style><div class="u">周线</div><div class="s">${Object.entries(t).map(([k,x])=>`<span style="left:${((x-67)/1595*100).toFixed(1)}%">${k.trim()}</span>`).join('')}</div>`});

define('order-book',()=>{
 const row=(n,p,v,b)=>`<tr class="${b?'big':''}"><th scope="row">${n}</th><td>${p}</td><td class="v">${v}</td></tr>`;
 return `<style>
:host{display:block;font:bold 14px/20px "Liberation Sans",sans-serif;color:#00e600}
table{width:100%;border-collapse:collapse;table-layout:fixed}
table+table{border-top:1px solid #b8140a}
th{font:14px/20px "Noto Sans CJK SC",sans-serif;color:#e8e8e8;text-align:left;padding:0 0 0 4px;width:46px}
td{padding:0;height:20px;text-align:right;width:63px}.v{text-align:left;padding-left:14px;color:#ff0;width:auto}
.big td{font-size:21px;height:30px}
</style><table>${row('卖五',3364,120)+row('卖四',3363,189)+row('卖三',3362,161)+row('卖二',3361,108)+row('卖一',3360,262,1)}</table>
<table>${row('买一',3359,140,1)+row('买二',3358,169)+row('买三',3357,682)+row('买四',3356,711)+row('买五',3355,829)}</table>`});

define('quote-stats',()=>{
 const c={g:'#00e600',r:'#ff3c3c',y:'#ffff00',w:'#f0f0f0'};
 const d=['最新 3359 g 结算 3395 r','涨跌 -20 g 昨结 3379 w','幅度 -0.59% g 开盘 3445 r','总手 910757 y 最高 3471 r','现手 14 y 最低 3343 g','涨停 3615 r 跌停 3142 g','持仓 989541 y 仓差 6696 y','外盘 429241 r 内盘 481516 g'];
 return `<style>
:host{display:block;border-top:1px solid #b8140a;font:bold 14px/20px "Liberation Sans",sans-serif}
table{width:100%;border-collapse:collapse;table-layout:fixed}
th{font:14px/20px "Noto Sans CJK SC",sans-serif;color:#e8e8e8;text-align:left;padding:0 0 0 4px;width:41px}
th.b{padding-left:14px}
td{padding:0;height:20px;text-align:right;width:68px}td.e{padding-right:5px;width:auto}
</style><table>${d.map(r=>{const[a,b,x,e,f,y]=r.split(' ');return `<tr><th scope="row">${a}</th><td style="color:${c[x]}">${b}</td><th scope="row" class="b">${e}</th><td class="e" style="color:${c[y]}">${f}</td></tr>`}).join('')}</table>`});

define('tick-table',()=>{
 const d=`14:59 3360 7 -3 g多平|:49 3360 27 -16 g多平|:50 3359 83 +12 g空开|:50 3358 206 +145 g空开|:51 3358 34 +10 g空开|:51 3359 28 +17 r多开|:52 3359 100 +5 r多开|:52 3358 147 +14 g空开|:53 3358 138 -19 g多平|:53 3359 9 +4 g空开|:54 3357 49 +21 g空开|:54 3359 21 +4 r多开|:55 3358 11 +5 g空开|:55 3357 54 +5 g空开|:56 3358 42 +25 r多开|:56 3358 21 -1 r空平|:57 3358 98 +67 r多开|:57 3358 14 +2 g空开|:58 3359 139 -128 r空平|:58 3359 33 -11 g多平|:59 3360 14 -11 r空平|:59 3360 9 -5 r空平|15:00 3359 14 -10 g多平`.split('|');
 return `<style>
:host{display:block;border-top:1px solid #b8140a;font:bold 14px/22px "Liberation Sans",sans-serif;color:#00e600}
table{width:100%;border-collapse:collapse;table-layout:fixed}
th{font:14px/22px "Noto Sans CJK SC",sans-serif;color:#7a7a7a;padding:0;text-align:right}
th:first-child{text-align:left;padding-left:4px}
td{padding:0;height:22px;text-align:right}
col:nth-child(1){width:41px}col:nth-child(2){width:63px}col:nth-child(3){width:48px}col:nth-child(4){width:48px}
.t{color:#f0f0f0;padding-right:2px;font-weight:normal;font-size:12px}.f{text-align:left;padding:0 0 0 4px;font-weight:bold;font-size:14px}
.d{color:#ff0}.r{color:#ff3c3c}
.k{font:14px/22px "Noto Sans CJK SC",sans-serif;padding-right:4px}th:last-child{padding-right:4px}
</style><table><colgroup><col><col><col><col><col></colgroup><thead><tr><th>北京</th><th>价格</th><th>现手</th><th>仓差</th><th>性质</th></tr></thead><tbody>${d.map(r=>{const[a,b,v,e,k]=r.split(' '),c=k[0];return `<tr><td class="t${a[0]===':'?'':' f'}">${a}</td><td>${b}</td><td class="${c}">${v}</td><td class="d">${e}</td><td class="k ${c}">${k.slice(1)}</td></tr>`}).join('')}</tbody></table>`});

define('quote-panel',()=>`<style>
:host{display:flex;flex-direction:column;border-left:1px solid #b8140a;background:#000;overflow:hidden;position:relative}
h2{margin:0;height:24px;font:21px/26px "Liberation Serif","Noto Sans CJK SC",serif;color:#ff0;text-align:center;padding-right:16px}
.bar{display:flex;height:4px;border:1px solid #b8140a;border-width:1px 0;padding:0 1px}
.bar i:first-child{flex:178;background:#ff4040}.bar i{flex:60;background:#00e600}
button{all:unset;position:absolute;right:1px;top:0;width:14px;height:13px;border:1px solid #80c0ff}
button::after{content:"";position:absolute;inset:2px;border:1px solid #80c0ff}
tick-table{flex:1}
.end{border-top:1px solid #b8140a;height:9px}
</style><h2>螺纹2010(rb2010)</h2><button aria-label="窗口"></button><div class="bar"><i></i><i></i></div><order-book></order-book><quote-stats></quote-stats><tick-table></tick-table><div class="end"></div>`);

define('site-logo',()=>`<style>
:host{position:absolute;right:6px;top:8px;z-index:5;display:flex;gap:4px;color:#e4551c;pointer-events:none}
div{display:flex;flex-direction:column}
b{display:flex;font:bold 17px/18px "Open Sans","Noto Sans CJK SC",sans-serif;white-space:nowrap}
em{font:normal 22px/18px "Open Sans",sans-serif;width:29px}
span{font:14px/12px "Open Sans",sans-serif;color:#f0a080}
</style><svg width="33" height="30" viewBox="0 0 33 30"><rect x=".5" y=".5" width="32" height="29" rx="3" fill="#e2541b"/><circle cx="16.500" cy="15" r="12" fill="none" stroke="#fff" stroke-width="2.400"/><path d="M7 10h19M16.500 10v14M10 17h13M9 23.500h15" stroke="#fff" stroke-width="3" fill="none"/></svg><div><b><em>5e</em>天资</b><span>5etz.com</span></div>`);

define('speed-widget',()=>`<style>
:host{position:absolute;right:190px;bottom:0;z-index:4;width:122px;height:46px;overflow:hidden;color:#e8e8e8}
svg{position:absolute;inset:0}
b,span{position:absolute;white-space:nowrap}
b{left:15px;top:25px;font:23px/30px "Open Sans",sans-serif}b small{font-size:10px}
span{left:88px;top:28px;font:12px/18px "Open Sans",sans-serif}
</style><svg width="122" height="46"><path d="M40 22h58q22 2 22 24H40z" fill="#343845"/><circle cx="30" cy="43" r="29" fill="#203142"/><path d="M30 15A28 28 0 0 1 58 43v4" fill="none" stroke="#20d8d0" stroke-width="2"/><path d="M8 46q8-8 20 0M32 46q10-8 22 0" fill="#176a72"/><path d="M66 32l4 5h-3v5h-2v-5h-3z" fill="#10a0ff"/>
<path d="M63 13l-1-7 6 3 4-8 4 8 6-3-1 8z" fill="#ffc040" stroke="#b86a10" stroke-width=".8"/><circle cx="72" cy="2" r="1.800" fill="#ffd860"/><path d="M62 12h20l2 10q-12-3-24 0z" fill="#ffe49a" stroke="#c07818"/><path d="M65 14l2.500 5 2-5M72 14v5M75 20v-5.500h3.500v3H75" fill="none" stroke="#8a3c08" stroke-width="1.500"/></svg><b>49<small>%</small></b><span>0K/s</span>`);

define('trade-app',()=>`<style>
:host{display:flex;flex-direction:column;height:100vh;position:relative;overflow:hidden}
main{flex:1;display:grid;grid-template-columns:5px minmax(0,1fr) 241px 9px;min-height:0}
.l{background:linear-gradient(90deg,#a8a8a8,#d8d8d8 60%,#b8b4ac)}
.r{background:#f7f7f7;border-left:3px solid #d4d0c8}
.charts{display:flex;flex-direction:column;min-height:0;position:relative;background:#000}
chart-panel{flex:112 1 0}
chart-panel[kind=main]{flex-grow:374}
chart-panel[kind=cci]{flex-grow:113}
.w{color:#fff}.y{color:#ff0}.m{color:#f0f}.g{color:#00e600}
</style><app-toolbar></app-toolbar><main><div class="l"></div><section class="charts"><chart-header></chart-header>
<chart-panel kind="main"><span>K  </span><span class="w">MA5:3450</span><span class="y">MA13:3416</span><span class="m">MA21:3338</span><span class="g">MA34:3465</span><span style="color:#7878e8">MA55:3575</span><span style="color:#f08000">MA89:3655</span><span style="color:#28a0dc">MA144:3645</span><span style="color:#d83058">MA233:3176 </span><span>SAR(10,2,20) </span><span style="color:#f01414">SARUP:3114 </span><span class="g">SARDOWN:0 </span><span> SSLO</span><span>3377 </span><span> BOLL(26,2)</span><span class="y">MID:3377</span><span class="m">UPPER:3721</span><span class="g">LOWER:3033</span></chart-panel>
<chart-panel kind="vol"><span>VOL(5,10)</span><span>VOLUME:3729728.0000</span><span class="w">MAVOL1:2185122.0000</span><span class="y">MAVOL2:1475553.4000</span></chart-panel>
<chart-panel kind="macd"><span>MACD(12,26,9)</span><span class="w">DIFF:-22.7218</span><span class="y">DEA:-44.9643</span><span>MACD:44.4849</span></chart-panel>
<chart-panel kind="kdj"><span>KDJ(9,3,3)</span><span class="w">K:76.0317</span><span class="y">D:78.9351</span><span class="m">J:70.2249</span></chart-panel>
<chart-panel kind="adtm"><span>ADTM(23,8)</span><span class="w">ADTM:0.4053</span><span class="y">MA1:0.2574</span></chart-panel>
<chart-panel kind="cci"><span>CCI(14)</span><span class="w">-37.7934</span></chart-panel>
<time-axis></time-axis><value-box></value-box></section><quote-panel></quote-panel><div class="r"></div></main><site-logo></site-logo><speed-widget></speed-widget>`);
</script>
</body>
</html>
